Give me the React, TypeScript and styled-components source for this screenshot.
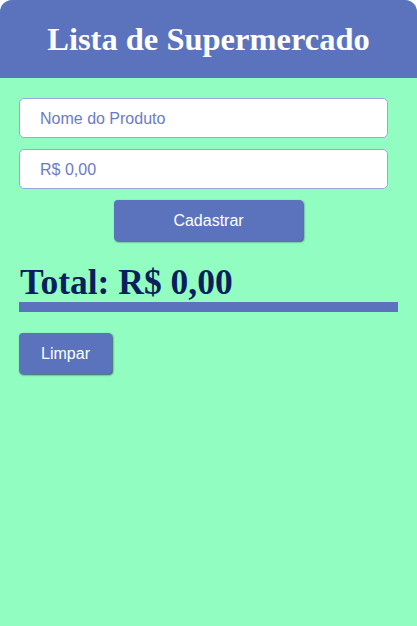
import React from "react";
import styled, { createGlobalStyle } from "styled-components";

const Global = createGlobalStyle`
  html, body { margin: 0; padding: 0; background: #ffffff; }
  * { box-sizing: border-box; }
`;

const Page = styled.div`
  min-height: 626px;
  background: #92fdc0;
  border-radius: 12px 12px 0 0;
  overflow: hidden;
  font-family: "Liberation Sans", Arial, sans-serif;
`;

const Header = styled.header`
  height: 78px;
  background: #5b73bc;
  display: flex;
  align-items: center;
  justify-content: center;
`;

const Title = styled.h1`
  margin: 0;
  color: #ffffff;
  font-family: "Liberation Serif", "Times New Roman", serif;
  font-weight: bold;
  font-size: 32.5px;
`;

const Main = styled.main`
  padding: 20px 19px;
  display: flex;
  flex-direction: column;
`;

const Form = styled.form`
  display: flex;
  flex-direction: column;
  align-items: center;
  gap: 11px;
`;

const Input = styled.input`
  align-self: flex-start;
  width: 369px;
  height: 40px;
  border: 1px solid #9aa6e2;
  border-radius: 5px;
  background: #ffffff;
  padding: 2px 20px 0;
  font-family: "Liberation Sans", Arial, sans-serif;
  font-size: 16px;
  color: #6b7bc7;
  outline: none;
  &::placeholder { color: #6b7bc7; }
`;

const Button = styled.button<{ $width: number }>`
  width: ${(p) => p.$width}px;
  height: 41px;
  background: #5b73bc;
  color: #ffffff;
  border: none;
  border-radius: 4px;
  box-shadow: 1px 1px 2px rgba(30, 40, 90, 0.8);
  font-family: "Liberation Sans", Arial, sans-serif;
  font-size: 16px;
  cursor: pointer;
`;

const Total = styled.h2`
  margin: 21px 0 0 1px;
  color: #0b1f5e;
  font-family: "Liberation Serif", "Times New Roman", serif;
  font-weight: bold;
  font-size: 35.5px;
  line-height: 40px;
`;

const Bar = styled.div`
  height: 10px;
  background: #5b73bc;
`;

const Actions = styled.div`
  margin-top: 21px;
  display: flex;
`;

export default function App() {
  return (
    <>
      <Global />
      <Page>
        <Header>
          <Title>Lista de Supermercado</Title>
        </Header>
        <Main>
          <Form onSubmit={(e) => e.preventDefault()}>
            <Input placeholder="Nome do Produto" />
            <Input placeholder="R$ 0,00" />
            <Button type="submit" $width={189}>Cadastrar</Button>
          </Form>
          <Total>Total: R$ 0,00</Total>
          <Bar />
          <Actions>
            <Button type="button" $width={93}>Limpar</Button>
          </Actions>
        </Main>
      </Page>
    </>
  );
}
